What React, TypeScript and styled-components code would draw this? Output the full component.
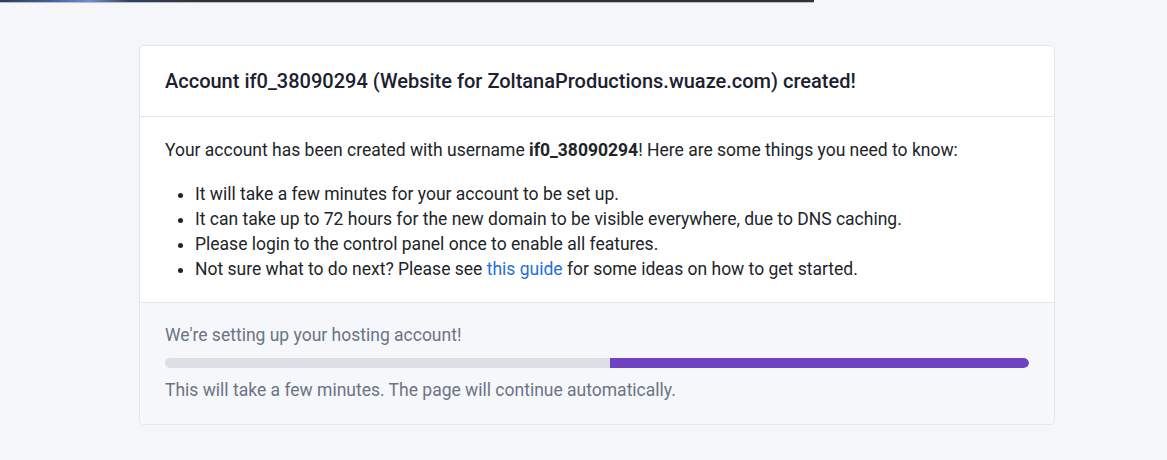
import React from 'react';
import styled, { createGlobalStyle } from 'styled-components';

const GlobalStyle = createGlobalStyle`
  html, body {
    margin: 0;
    padding: 0;
    background: #f5f6fa;
    font-family: Roboto, "Liberation Sans", Arial, sans-serif;
    color: #212529;
  }
`;

const TopStrip = styled.div`
  width: 814px;
  height: 2px;
  background: linear-gradient(90deg, #2b3a55 0%, #3d5f9e 6%, #6e8fd0 11%, #2f3f66 16%, #333 24%, #333 100%);
  border-bottom: 1px solid #bdbdbd;
`;

const Page = styled.div`
  padding: 42px 0 36px 139px;
`;

const Card = styled.div`
  width: 914px;
  background: #fff;
  border: 1px solid #e4e6ec;
  border-radius: 5px;
  overflow: hidden;
`;

const CardHeader = styled.div`
  padding: 22px 25px 21px;
  border-bottom: 1px solid #e4e6ec;
`;

const Title = styled.h1`
  margin: 0;
  font-size: 20px;
  line-height: 27px;
  font-weight: 500;
  color: #1c2130;
`;

const CardBody = styled.div`
  padding: 21px 25px 20px;
  font-size: 17.5px;
  line-height: 25px;
`;

const Intro = styled.p`
  margin: 0 0 19px;
`;

const List = styled.ul`
  margin: 0;
  padding-left: 30px;
`;

const Link = styled.a`
  color: #1f6fd8;
  text-decoration: none;
`;

const CardFooter = styled.div`
  background: #f6f7fb;
  border-top: 1px solid #e4e6ec;
  padding: 20px 25px 21px;
  font-size: 17.5px;
  line-height: 25px;
  color: #6b7385;
`;

const Track = styled.div`
  display: flex;
  justify-content: flex-end;
  height: 10px;
  margin: 10px 0 10px;
  border-radius: 5px;
  background: #dce0e6;
  overflow: hidden;
`;

const Fill = styled.div`
  height: 100%;
  background: #6f42c1;
  border-radius: 0 5px 5px 0;
`;

const items = [
  'It will take a few minutes for your account to be set up.',
  'It can take up to 72 hours for the new domain to be visible everywhere, due to DNS caching.',
  'Please login to the control panel once to enable all features.',
];

export default function App() {
  const progress = 48.5;
  return (
    <>
      <GlobalStyle />
      <TopStrip />
      <Page>
        <Card>
          <CardHeader>
            <Title>Account if0_38090294 (Website for ZoltanaProductions.wuaze.com) created!</Title>
          </CardHeader>
          <CardBody>
            <Intro>
              Your account has been created with username <b>if0_38090294</b>! Here are some things you need to know:
            </Intro>
            <List>
              {items.map((item) => (
                <li key={item}>{item}</li>
              ))}
              <li>
                Not sure what to do next? Please see <Link href="#">this guide</Link> for some ideas on how to get started.
              </li>
            </List>
          </CardBody>
          <CardFooter>
            <div>We're setting up your hosting account!</div>
            <Track>
              <Fill style={{ width: `${progress}%` }} />
            </Track>
            <div>This will take a few minutes. The page will continue automatically.</div>
          </CardFooter>
        </Card>
      </Page>
    </>
  );
}
